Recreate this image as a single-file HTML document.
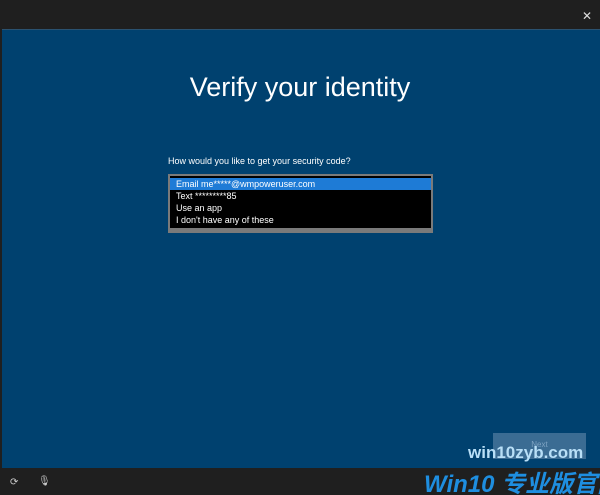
<!DOCTYPE html>
<html><head><style>
html,body{margin:0;width:600px;height:495px;overflow:hidden}
body{background:#1f1f1f;position:relative;font-family:"Liberation Sans","Noto Sans CJK SC",sans-serif}
.main{position:absolute;left:2px;top:29px;width:598px;height:438px;background:#00416f;border-top:1px solid #2b5270}
h1{position:absolute;top:71px;left:0;width:600px;text-align:center;color:#fff;font-weight:300;font-size:27px;margin:0;line-height:32px}
.q{position:absolute;left:168px;top:156px;color:#fff;font-size:9px;white-space:nowrap}
.lb{position:absolute;left:168px;top:174px;width:261px;height:50px;background:#000;border:2px solid #7a7a7a;border-bottom-width:5px;padding-top:2px}
.it{height:12px;line-height:12px;font-size:9px;color:#fff;padding-left:6px;white-space:nowrap}
.sel{background:#1e7bd6}
.next{position:absolute;left:493px;top:433px;width:93px;height:26px;background:#3b6c93;color:#7ea3c2;font-size:8px;text-align:center;line-height:24px}
.x{position:absolute;left:582px;top:9px;color:#ddd;font-size:12px}
.wm{position:absolute;left:424px;top:464px;font-size:24px;font-weight:bold;font-style:italic;color:#1e8ee0;white-space:nowrap}
.wm2{position:absolute;left:468px;top:443px;font-size:17px;font-weight:bold;color:#b8dff7;white-space:nowrap}
</style></head><body>
<div class="x">✕</div>
<div class="main"></div>
<h1>Verify your identity</h1>
<div class="q">How would you like to get your security code?</div>
<div class="lb">
<div class="it sel">Email me*****@wmpoweruser.com</div>
<div class="it">Text *********85</div>
<div class="it">Use an app</div>
<div class="it">I don't have any of these</div>
</div>
<div class="next">Next</div>
<div class="wm2">win10zyb.com</div>
<div class="wm">Win10 专业版官网</div>
<div style="position:absolute;left:10px;top:477px;color:#ccc;font-size:10px">⟳</div>
<div style="position:absolute;left:38px;top:476px;color:#ccc;font-size:10px">🎙</div>
</body></html>
